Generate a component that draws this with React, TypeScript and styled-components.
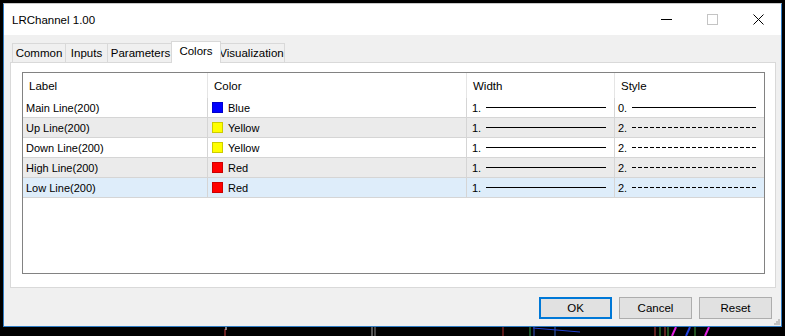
import React from "react";
import styled, { createGlobalStyle } from "styled-components";

const GlobalStyle = createGlobalStyle`
  html, body {
    margin: 0;
    padding: 0;
    background: #000;
  }
  body {
    font-family: "Liberation Sans", Arial, sans-serif;
    font-size: 11px;
    color: #000;
  }
`;

const Screen = styled.div`
  width: 785px;
  height: 336px;
  padding: 3px 0 0 3px;
  box-sizing: border-box;
  overflow: hidden;
  background: #000;
`;

const Window = styled.div`
  width: 779px;
  height: 324px;
  box-sizing: border-box;
  border: 1px solid #2f7cc4;
  border-top-color: #c9c9c9;
  background: #f0f0f0;
  display: flex;
  flex-direction: column;
  position: relative;
`;

const TitleBar = styled.div`
  height: 31px;
  background: #fff;
  display: flex;
  align-items: center;
  padding-left: 8px;
  flex-shrink: 0;
`;

const Title = styled.span`
  flex: 1;
  font-size: 11.5px;
  padding-top: 1px;
`;

const CaptionButton = styled.div`
  width: 46px;
  height: 31px;
  display: flex;
  align-items: center;
  justify-content: center;
`;

const TabStrip = styled.div`
  display: flex;
  align-items: flex-end;
  margin: 6px 0 0 8px;
  height: 21px;
  position: relative;
  z-index: 1;
`;

const Tab = styled.div<{ $active?: boolean; $w: number }>`
  width: ${(p) => p.$w}px;
  height: ${(p) => (p.$active ? "22px" : "19px")};
  box-sizing: border-box;
  display: flex;
  justify-content: center;
  align-items: flex-start;
  padding-top: ${(p) => (p.$active ? "3px" : "3px")};
  margin-left: ${(p) => (p.$active ? "-3px" : "-1px")};
  margin-right: ${(p) => (p.$active ? "-2px" : "0")};
  margin-bottom: ${(p) => (p.$active ? "-1px" : "0")};
  background: ${(p) => (p.$active ? "#fff" : "#f0f0f0")};
  border: 1px solid #d9d9d9;
  border-bottom: none;
  position: relative;
  z-index: ${(p) => (p.$active ? 2 : 1)};
  white-space: nowrap;
  font-size: 11.5px;
  &:first-child {
    margin-left: 0;
  }
`;

const Panel = styled.div`
  margin: 0 5px 0 6px;
  height: 226px;
  box-sizing: border-box;
  background: #fff;
  border: 1px solid #d9d9d9;
  padding: 9px 10px 13px 11px;
  display: flex;
`;

const ListBox = styled.div`
  flex: 1;
  border: 1px solid #828282;
  background: #fff;
`;

const Grid = styled.div`
  display: grid;
  grid-template-columns: 185px 259px 148px 1fr;
`;

const HeadCell = styled.div<{ $last?: boolean }>`
  height: 25px;
  display: flex;
  align-items: center;
  padding-left: 6px;
  border-right: ${(p) => (p.$last ? "none" : "1px solid #e5e5e5")};
  font-size: 11.5px;
`;

const Cell = styled.div<{ $bg: string; $last?: boolean; $pad?: number }>`
  height: 20px;
  box-sizing: border-box;
  display: flex;
  align-items: center;
  padding-left: ${(p) => p.$pad ?? 3}px;
  padding-right: 8px;
  background: ${(p) => p.$bg};
  border-bottom: 1px solid #d5d5d5;
  border-right: ${(p) => (p.$last ? "none" : "1px solid #d5d5d5")};
  font-size: 11px;
  white-space: nowrap;
`;

const Swatch = styled.span<{ $color: string }>`
  width: 11px;
  height: 11px;
  box-sizing: border-box;
  background: ${(p) => p.$color};
  border: 1px solid rgba(0, 0, 0, 0.2);
  margin-right: 5px;
  flex-shrink: 0;
`;

const Num = styled.span`
  width: 14px;
  flex-shrink: 0;
`;

const SolidLine = styled.span`
  flex: 1;
  height: 1px;
  background: #000;
`;

const DashLine = styled.span`
  flex: 1;
  height: 1px;
  background: repeating-linear-gradient(90deg, #000 0 4px, transparent 4px 6px);
`;

const Footer = styled.div`
  display: flex;
  justify-content: flex-end;
  gap: 7px;
  padding: 9px 9px 0 0;
`;

const Button = styled.div<{ $default?: boolean }>`
  width: 73px;
  height: 22px;
  box-sizing: border-box;
  display: flex;
  align-items: center;
  justify-content: center;
  background: #e1e1e1;
  border: ${(p) => (p.$default ? "2px solid #0078d7" : "1px solid #adadad")};
  font-size: 11.5px;
`;

const Grip = styled.svg`
  position: absolute;
  right: 1px;
  bottom: 1px;
`;

const ChartStrip = styled.svg`
  display: block;
  margin-left: -3px;
`;

type Row = {
  label: string;
  color: string;
  colorName: string;
  style: string;
  dashed: boolean;
  bg: string;
};

const rows: Row[] = [
  { label: "Main Line(200)", color: "#0000ff", colorName: "Blue", style: "0.", dashed: false, bg: "#fff" },
  { label: "Up Line(200)", color: "#ffff00", colorName: "Yellow", style: "2.", dashed: true, bg: "#ebebeb" },
  { label: "Down Line(200)", color: "#ffff00", colorName: "Yellow", style: "2.", dashed: true, bg: "#fff" },
  { label: "High Line(200)", color: "#ff0000", colorName: "Red", style: "2.", dashed: true, bg: "#ebebeb" },
  { label: "Low Line(200)", color: "#ff0000", colorName: "Red", style: "2.", dashed: true, bg: "#deedfa" },
];

const tabs = [
  { name: "Common", w: 54 },
  { name: "Inputs", w: 43 },
  { name: "Parameters", w: 67 },
  { name: "Colors", w: 50 },
  { name: "Visualization", w: 67 },
];

export default function App() {
  return (
    <>
      <GlobalStyle />
      <Screen>
        <Window>
          <TitleBar>
            <Title>LRChannel 1.00</Title>
            <CaptionButton>
              <svg width="11" height="11" viewBox="0 0 11 11">
                <line x1="0" y1="5.5" x2="11" y2="5.5" stroke="#000" strokeWidth="1" />
              </svg>
            </CaptionButton>
            <CaptionButton>
              <svg width="11" height="11" viewBox="0 0 11 11">
                <rect x="0.5" y="0.5" width="10" height="10" fill="none" stroke="#c4c4c4" />
              </svg>
            </CaptionButton>
            <CaptionButton>
              <svg width="11" height="11" viewBox="0 0 11 11">
                <path d="M0.5 0.5 L10.5 10.5 M10.5 0.5 L0.5 10.5" stroke="#000" strokeWidth="1" />
              </svg>
            </CaptionButton>
          </TitleBar>
          <TabStrip>
            {tabs.map((t) => (
              <Tab key={t.name} $w={t.w} $active={t.name === "Colors"}>
                {t.name}
              </Tab>
            ))}
          </TabStrip>
          <Panel>
            <ListBox>
              <Grid>
                <HeadCell>Label</HeadCell>
                <HeadCell>Color</HeadCell>
                <HeadCell>Width</HeadCell>
                <HeadCell $last>Style</HeadCell>
                {rows.map((r) => (
                  <React.Fragment key={r.label}>
                    <Cell $bg={r.bg}>{r.label}</Cell>
                    <Cell $bg={r.bg} $pad={4}>
                      <Swatch $color={r.color} />
                      {r.colorName}
                    </Cell>
                    <Cell $bg={r.bg} $pad={5}>
                      <Num>1.</Num>
                      <SolidLine />
                    </Cell>
                    <Cell $bg={r.bg} $last $pad={3}>
                      <Num>{r.style}</Num>
                      {r.dashed ? <DashLine /> : <SolidLine />}
                    </Cell>
                  </React.Fragment>
                ))}
              </Grid>
            </ListBox>
          </Panel>
          <Footer>
            <Button $default>OK</Button>
            <Button>Cancel</Button>
            <Button>Reset</Button>
          </Footer>
          <Grip width="6" height="6" viewBox="0 0 6 6">
            <rect x="4" y="0" width="2" height="2" fill="#c2c2c2" />
            <rect x="2" y="2" width="2" height="2" fill="#c2c2c2" />
            <rect x="4" y="2" width="2" height="2" fill="#c2c2c2" />
            <rect x="0" y="4" width="2" height="2" fill="#c2c2c2" />
            <rect x="2" y="4" width="2" height="2" fill="#c2c2c2" />
            <rect x="4" y="4" width="2" height="2" fill="#c2c2c2" />
          </Grip>
        </Window>
        <ChartStrip width="785" height="9" viewBox="0 0 785 9">
          <line x1="225" y1="2" x2="225" y2="9" stroke="#d04040" />
          <line x1="226" y1="0" x2="226" y2="3" stroke="#fff" />
          <line x1="372" y1="0" x2="372" y2="9" stroke="#aaa" />
          <line x1="375" y1="0" x2="375" y2="9" stroke="#888" />
          <line x1="503" y1="0" x2="503" y2="9" stroke="#b03030" />
          <line x1="530" y1="0" x2="530" y2="9" stroke="#30a050" />
          <line x1="534" y1="0" x2="534" y2="9" stroke="#3050c0" />
          <line x1="555" y1="0" x2="555" y2="9" stroke="#3060c0" />
          <line x1="533" y1="1" x2="580" y2="5" stroke="#2040d0" />
          <line x1="655" y1="0" x2="655" y2="9" stroke="#c04040" />
          <line x1="660" y1="0" x2="660" y2="9" stroke="#40a040" />
          <line x1="665" y1="0" x2="665" y2="9" stroke="#c04040" />
          <line x1="668" y1="0" x2="668" y2="9" stroke="#40a040" />
          <line x1="676" y1="0" x2="672" y2="9" stroke="#e020e0" strokeWidth="2" />
          <line x1="690" y1="0" x2="686" y2="9" stroke="#2040e0" strokeWidth="2" />
          <line x1="695" y1="0" x2="695" y2="9" stroke="#40a040" />
          <line x1="709" y1="0" x2="705" y2="9" stroke="#e020e0" strokeWidth="2" />
        </ChartStrip>
      </Screen>
    </>
  );
}
